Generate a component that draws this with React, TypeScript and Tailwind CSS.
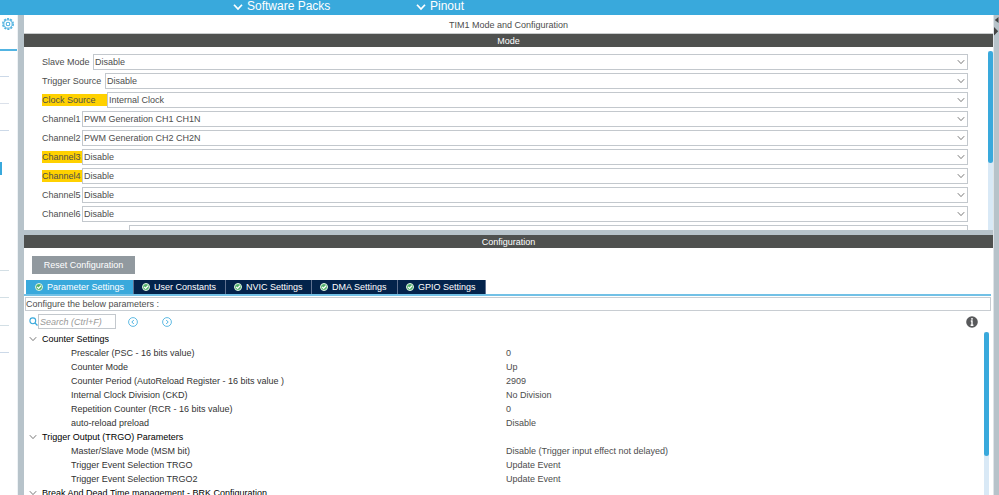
import { Fragment, useState } from "react"
import { clsx } from "clsx"

const modes = [
  { id: "slave", label: "Slave Mode", value: "Disable", width: "w-[51px]" },
  { id: "trigger", label: "Trigger Source", value: "Disable", width: "w-[63px]" },
  { id: "clock", label: "Clock Source", value: "Internal Clock", width: "w-[65px]", warn: true },
  { id: "ch1", label: "Channel1", value: "PWM Generation CH1 CH1N", width: "w-[40px]" },
  { id: "ch2", label: "Channel2", value: "PWM Generation CH2 CH2N", width: "w-[40px]" },
  { id: "ch3", label: "Channel3", value: "Disable", width: "w-[40px]", warn: true },
  { id: "ch4", label: "Channel4", value: "Disable", width: "w-[40px]", warn: true },
  { id: "ch5", label: "Channel5", value: "Disable", width: "w-[40px]" },
  { id: "ch6", label: "Channel6", value: "Disable", width: "w-[40px]" },
  { id: "combined", label: "", value: "", width: "w-[87px]" },
]

const tabs = [
  { label: "Parameter Settings", width: "w-[108px]" },
  { label: "User Constants", width: "w-[92px]" },
  { label: "NVIC Settings", width: "w-[86px]" },
  { label: "DMA Settings", width: "w-[86px]" },
  { label: "GPIO Settings", width: "w-[88px]" },
]

const groups = [
  {
    name: "Counter Settings",
    rows: [
      ["Prescaler (PSC - 16 bits value)", "0"],
      ["Counter Mode", "Up"],
      ["Counter Period (AutoReload Register - 16 bits value )", "2909"],
      ["Internal Clock Division (CKD)", "No Division"],
      ["Repetition Counter (RCR - 16 bits value)", "0"],
      ["auto-reload preload", "Disable"],
    ],
  },
  {
    name: "Trigger Output (TRGO) Parameters",
    rows: [
      ["Master/Slave Mode (MSM bit)", "Disable (Trigger input effect not delayed)"],
      ["Trigger Event Selection TRGO", "Update Event"],
      ["Trigger Event Selection TRGO2", "Update Event"],
    ],
  },
  { name: "Break And Dead Time management - BRK Configuration", rows: [] },
]

function Chevron({ className }: { className?: string }) {
  return (
    <svg viewBox="0 0 8 8" className={className} fill="none" stroke="currentColor" aria-hidden="true">
      <path d="M0.8 2.2 4 5.6 7.2 2.2" />
    </svg>
  )
}

function Check() {
  return (
    <svg viewBox="0 0 16 16" className="size-2 shrink-0" aria-hidden="true">
      <circle cx="8" cy="8" r="7" fill="#4fb06a" stroke="#e4f5e8" strokeWidth="2" />
      <path d="M4.2 7.8 7.2 10.8 12 5.6" fill="none" stroke="#fff" strokeWidth="2.6" />
    </svg>
  )
}

function ArrowCircle({ flip }: { flip?: boolean }) {
  return (
    <svg viewBox="0 0 10 10" className={clsx("size-2.5", flip && "rotate-180")} fill="none" stroke="currentColor">
      <circle cx="5" cy="5" r="4.4" strokeWidth="0.8" />
      <path d="M5.8 3 3.8 5 5.8 7" strokeWidth="0.9" />
    </svg>
  )
}

function Gear() {
  return (
    <svg viewBox="0 0 24 24" className="size-3" fill="none" stroke="currentColor" aria-hidden="true">
      <circle cx="12" cy="12" r="10.4" strokeWidth="3" strokeDasharray="4.2 2.33" />
      <circle cx="12" cy="12" r="8.4" strokeWidth="2" />
      <circle cx="12" cy="12" r="3.6" strokeWidth="2.2" />
    </svg>
  )
}

function SectionBar({ children }: { children: string }) {
  return (
    <h2 className="h-[13px] shrink-0 bg-[#4f514f] text-center leading-[14px] text-white">{children}</h2>
  )
}

function Sidebar() {
  return (
    <nav aria-label="Categories" className="flex w-[18px] shrink-0 flex-col border-r border-[#eef2f5] bg-white">
      <button type="button" aria-label="Settings" className="mt-[3px] ml-0.5 size-3 text-[#4db1e0]">
        <Gear />
      </button>
      <hr className="mt-[19px] border-t-2 border-[#52b4e2]" />
      <div className="w-[9px] pt-[25px]">
        <hr className="mb-[26px] border-[#ccd9e8]" />
        <hr className="mb-[26px] border-[#dbe1ea]" />
        <hr className="mb-[31px] border-[#ccd9e8]" />
        <div className="mb-[95px] h-[13px] w-0.5 bg-[#39a9dc]" />
        <hr className="mb-[26px] border-[#d3dfe5]" />
        <hr className="mb-[27px] border-[#d3dfe5]" />
        <hr className="mb-[26px] border-[#d3dfe5]" />
        <hr className="border-[#ccd9e8]" />
      </div>
    </nav>
  )
}

function ModePanel() {
  return (
    <section className="flex h-[183px] shrink-0 overflow-hidden bg-white">
      <form className="flex min-w-0 grow flex-col gap-[3px] pt-[7px] pr-5 pl-[18px]">
        {modes.map((m) => (
          <div key={m.id} className="flex h-4 shrink-0 items-center">
            <label
              htmlFor={m.id}
              className={clsx("h-3 shrink-0 leading-3 whitespace-nowrap", m.width, m.warn && "bg-[#ffd100]")}
            >
              {m.label}
            </label>
            <div className="relative h-4 min-w-0 grow">
              <select
                id={m.id}
                className="block h-4 w-full appearance-none border border-[#c3c8cd] bg-white pl-px leading-[14px] outline-none"
              >
                <option>{m.value}</option>
              </select>
              <Chevron className="pointer-events-none absolute top-1 right-[3px] size-2 text-[#777]" />
            </div>
          </div>
        ))}
      </form>
      <div className="mt-1 w-[5px] shrink-0 bg-[#d9e9f6]">
        <div className="h-28 rounded-full bg-[#39a9dc]" />
      </div>
    </section>
  )
}

function ParameterTable() {
  return (
    <table className="w-full table-fixed border-collapse text-left">
      <colgroup>
        <col className="w-[482px]" />
        <col />
      </colgroup>
      <tbody>
        {groups.map((g) => (
          <Fragment key={g.name}>
            <tr className="h-3.5">
              <th colSpan={2} className="p-0 pl-[5px] font-normal text-black">
                <button type="button" className="flex h-3.5 items-center gap-[5px] leading-[14px]">
                  <Chevron className="size-2 text-[#777]" />
                  {g.name}
                </button>
              </th>
            </tr>
            {g.rows.map(([name, value]) => (
              <tr key={name} className="h-3.5">
                <td className="p-0 pl-[47px] leading-[14px] text-[#333]">{name}</td>
                <td className="p-0 leading-[14px]">{value}</td>
              </tr>
            ))}
          </Fragment>
        ))}
      </tbody>
    </table>
  )
}

function ConfigPanel() {
  const [active, setActive] = useState(0)

  return (
    <section className="flex min-h-0 grow flex-col bg-white pt-2">
      <button type="button" className="ml-2 h-[18px] w-[103px] shrink-0 bg-[#91999f] leading-[18px] text-white">
        Reset Configuration
      </button>
      <div role="tablist" className="mt-1.5 mr-[2px] flex shrink-0 border-b-2 border-[#72c1e6] pl-0.5">
        {tabs.map((t, i) => (
          <button
            key={t.label}
            type="button"
            role="tab"
            aria-selected={i === active}
            onClick={() => setActive(i)}
            className={clsx(
              "flex h-3.5 items-center gap-1 border-r border-[#5f7190] leading-[14px] text-white",
              t.width,
              i === active ? "bg-[#39a9dc] pl-[9px]" : "bg-[#03234b] pl-2",
            )}
          >
            <Check />
            {t.label}
          </button>
        ))}
      </div>
      <p className="mt-px mr-[2px] ml-px h-3.5 shrink-0 border border-[#c8cdd2] leading-[13px]">
        Configure the below parameters :
      </p>
      <div className="flex h-[21px] shrink-0 items-center pr-[15px] pl-[5px]">
        <label htmlFor="search" aria-label="Search" className="text-[#39a9dc]">
          <svg viewBox="0 0 9 9" className="size-[9px]" fill="none" stroke="currentColor">
            <circle cx="3.8" cy="3.8" r="2.9" strokeWidth="1.1" />
            <path d="m6 6 2.5 2.5" strokeWidth="1.3" />
          </svg>
        </label>
        <input
          id="search"
          type="text"
          placeholder="Search (Ctrl+F)"
          className="h-[15px] w-[78px] border border-[#c3c8cd] pl-px italic outline-none placeholder:text-[#999]"
        />
        <button type="button" aria-label="Previous match" className="ml-3 text-[#39a9dc]">
          <ArrowCircle />
        </button>
        <button type="button" aria-label="Next match" className="ml-6 text-[#39a9dc]">
          <ArrowCircle flip />
        </button>
        <button type="button" aria-label="Information" className="ml-auto">
          <svg viewBox="0 0 12 12" className="size-3">
            <circle cx="6" cy="6" r="5.8" fill="#58595b" />
            <path d="M6 2v1.7M4.8 5H6v4M4.6 9.2h2.8" fill="none" stroke="#fff" strokeWidth="1.4" />
          </svg>
        </button>
      </div>
      <div className="flex min-h-0 grow overflow-hidden pr-1">
        <div className="min-w-0 grow overflow-hidden">
          <ParameterTable />
        </div>
        <div className="w-[5px] shrink-0 bg-[#d9e9f6]">
          <div className="h-[124px] rounded-full bg-[#39a9dc]" />
        </div>
      </div>
    </section>
  )
}

export default function App() {
  return (
    <div className="flex h-screen flex-col overflow-hidden bg-white font-['Liberation_Sans',Arial,sans-serif] text-[9px] text-[#4d4d4d]">
      <header className="flex h-[15px] shrink-0 bg-[#39a9dc] pl-[233px] text-xs leading-[13px] text-white">
        <button type="button" className="flex h-[13px] w-[183px] items-center gap-1">
          <Chevron className="size-2.5 stroke-[1.4]" />
          Software Packs
        </button>
        <button type="button" className="flex h-[13px] items-center gap-1">
          <Chevron className="size-2.5 stroke-[1.4]" />
          Pinout
        </button>
      </header>
      <div className="flex min-h-0 grow">
        <Sidebar />
        <div className="w-1.5 shrink-0 bg-[#b7c3ca]" />
        <main className="flex min-w-0 grow flex-col">
          <h1 className="h-[19px] shrink-0 border-b border-[#c9cccd] text-center leading-[21px]">
            TIM1 Mode and Configuration
          </h1>
          <SectionBar>Mode</SectionBar>
          <ModePanel />
          <div className="h-[5px] shrink-0 bg-[#b7c3ca]" />
          <SectionBar>Configuration</SectionBar>
          <ConfigPanel />
        </main>
        <div className="w-1.5 shrink-0 border-l border-[#dfe4e8] bg-[#b7c3ca]">
          <svg viewBox="0 0 5 22" className="h-[22px] w-[5px]" fill="#444" aria-hidden="true">
            <path d="M4.5 2v6L0.8 5zM0 12l4.2 4.2L0 20.5z" />
          </svg>
        </div>
      </div>
    </div>
  )
}
